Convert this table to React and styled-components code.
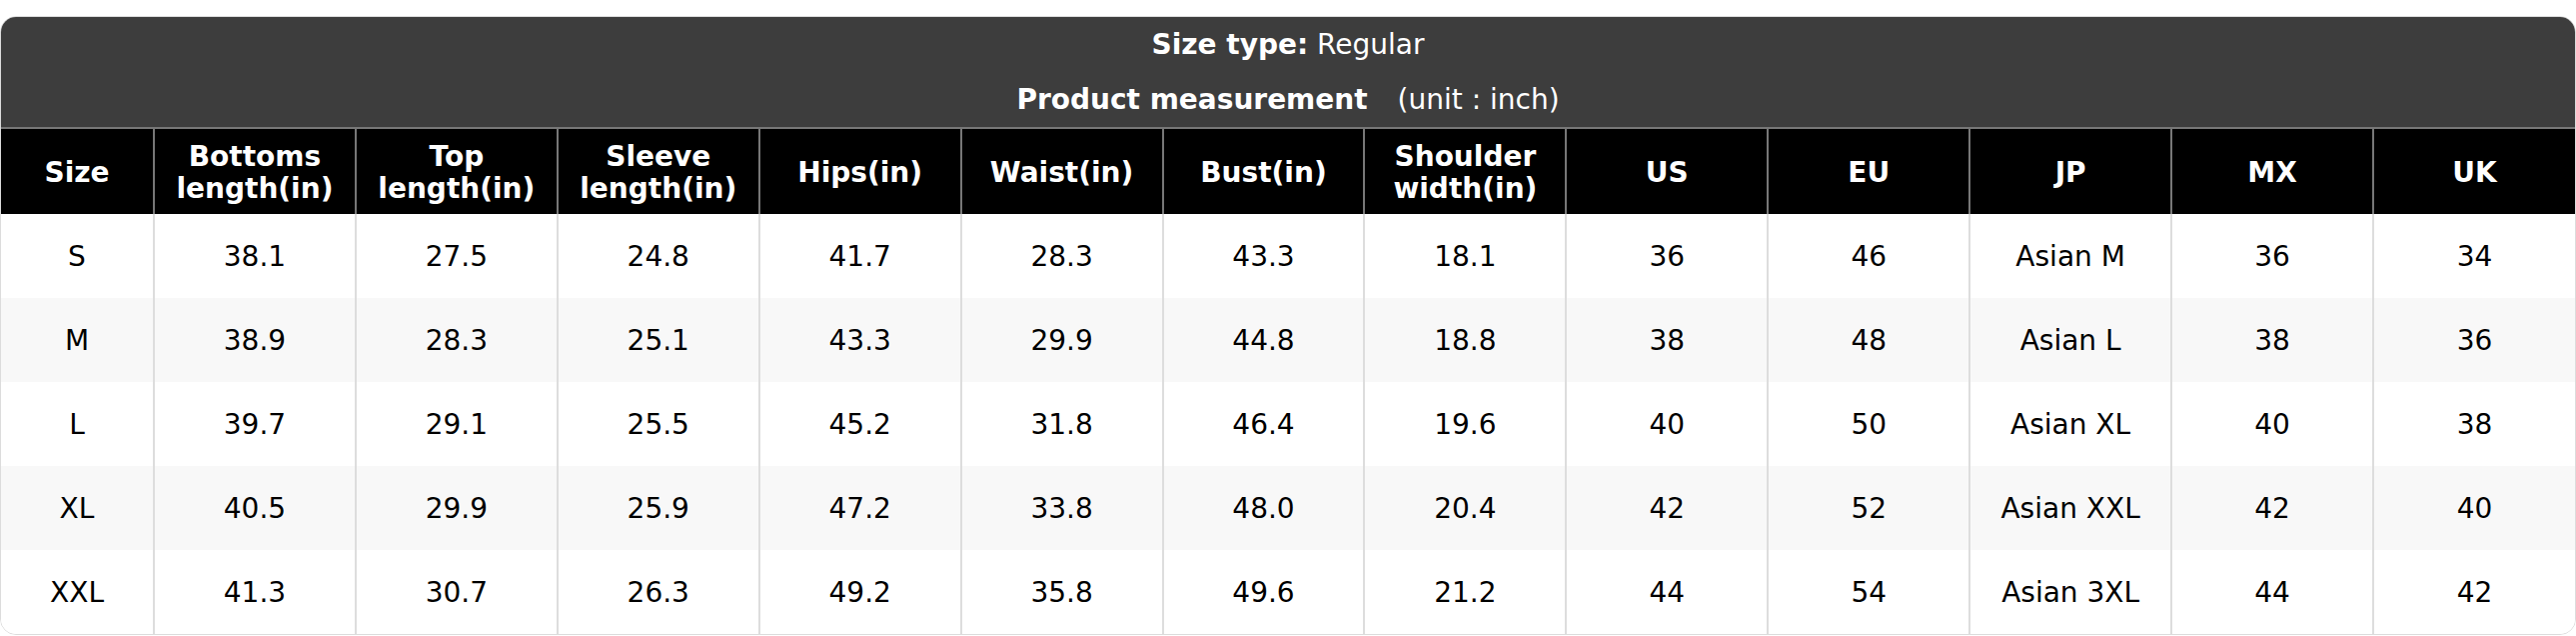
import React from "react";
import styled, { createGlobalStyle } from "styled-components";

const GlobalStyle = createGlobalStyle`
    body {
        margin: 0;
        padding-top: 16px;
        background: #ffffff;
        font-family: "DejaVu Sans", "Noto Sans", sans-serif;
    }
`;

const Wrap = styled.div`
    border: 1px solid #dcdcdc;
    border-radius: 16px;
    overflow: hidden;
`;

const Caption = styled.div`
    background: #3d3d3d;
    color: #ffffff;
    text-align: center;
    font-size: 28px;
    line-height: 55px;
    b {
        font-weight: bold;
    }
    .unit {
        margin-left: 30px;
    }
`;

const Table = styled.table`
    width: 100%;
    border-collapse: collapse;
    table-layout: fixed;
    font-size: 28px;
`;

const HeadCell = styled.th`
    background: #000000;
    color: #ffffff;
    font-weight: bold;
    height: 82px;
    padding: 3px 6px 0;
    line-height: 32px;
    border-left: 2px solid #777777;
    border-top: 2px solid #777777;
    width: ${(p) => (p.$narrow ? "140px" : "auto")};
    &:first-child {
        border-left: none;
    }
`;

const Row = styled.tr`
    background: ${(p) => (p.$odd ? "#f8f8f8" : "#ffffff")};
`;

const Cell = styled.td`
    height: 84px;
    padding: 0;
    text-align: center;
    color: #000000;
    border-left: 2px solid #dddddd;
    &:first-child {
        border-left: none;
    }
`;

const headers = [
    "Size",
    "Bottoms length(in)",
    "Top length(in)",
    "Sleeve length(in)",
    "Hips(in)",
    "Waist(in)",
    "Bust(in)",
    "Shoulder width(in)",
    "US",
    "EU",
    "JP",
    "MX",
    "UK",
];

const rows = [
    ["S", "38.1", "27.5", "24.8", "41.7", "28.3", "43.3", "18.1", "36", "46", "Asian M", "36", "34"],
    ["M", "38.9", "28.3", "25.1", "43.3", "29.9", "44.8", "18.8", "38", "48", "Asian L", "38", "36"],
    ["L", "39.7", "29.1", "25.5", "45.2", "31.8", "46.4", "19.6", "40", "50", "Asian XL", "40", "38"],
    ["XL", "40.5", "29.9", "25.9", "47.2", "33.8", "48.0", "20.4", "42", "52", "Asian XXL", "42", "40"],
    ["XXL", "41.3", "30.7", "26.3", "49.2", "35.8", "49.6", "21.2", "44", "54", "Asian 3XL", "44", "42"],
];

export default function App() {
    return (
        <>
            <GlobalStyle />
            <Wrap>
                <Caption>
                    <div>
                        <b>Size type:</b> Regular
                    </div>
                    <div>
                        <b>Product measurement</b>
                        <span className="unit">(unit : inch)</span>
                    </div>
                </Caption>
                <Table>
                    <thead>
                        <tr>
                            {headers.map((h, i) => (
                                <HeadCell key={h} $narrow={i === 0}>
                                    {h}
                                </HeadCell>
                            ))}
                        </tr>
                    </thead>
                    <tbody>
                        {rows.map((r, i) => (
                            <Row key={r[0]} $odd={i % 2 === 1}>
                                {r.map((c, j) => (
                                    <Cell key={j}>{c}</Cell>
                                ))}
                            </Row>
                        ))}
                    </tbody>
                </Table>
            </Wrap>
        </>
    );
}
